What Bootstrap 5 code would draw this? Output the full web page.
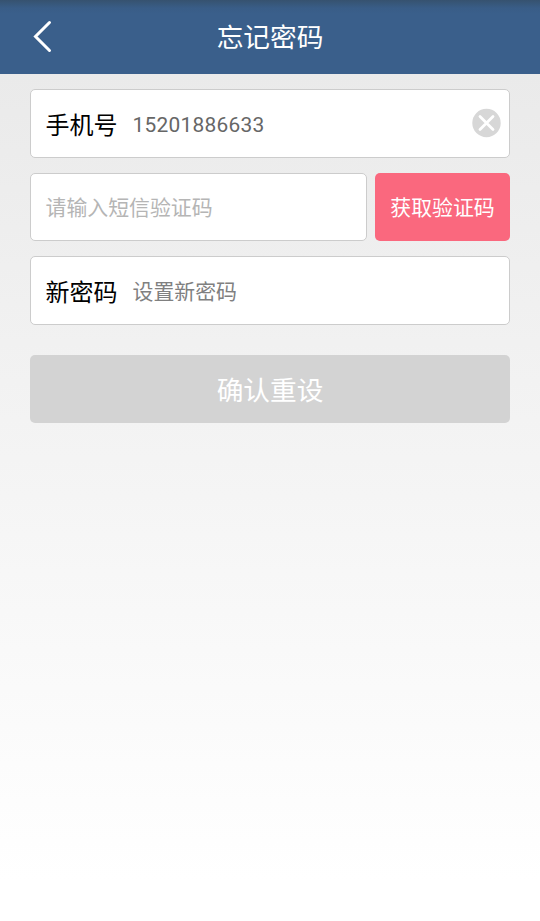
<!DOCTYPE html>
<html lang="zh-CN">
<head>
<meta charset="utf-8">
<meta name="viewport" content="width=device-width, initial-scale=1">
<title>忘记密码</title>
<link href="https://cdn.jsdelivr.net/npm/bootstrap@5.3.0/dist/css/bootstrap.min.css" rel="stylesheet">
<style>
body {
  font-family: Roboto, "Noto Sans CJK SC", sans-serif;
  background: linear-gradient(#eaeaea 0, #eaeaea 74px, #fff 880px) no-repeat #fff;
  min-height: 921px;
  line-height: 1;
}
.top-bar {
  height: 74px;
  background: linear-gradient(#36526f 0, #395d87 8px, #3a5f8b 14px);
}
.top-bar h1 { font-size: 26.7px; line-height: 40px; padding-top: 2px; }
.back-btn { width: 86px; height: 74px; flex: none; }
.form-area { padding: 15px 30px 0; }
.field {
  height: 69px;
  border: 1px solid #ccc;
  border-radius: 5px;
  padding: 0 8px 0 14.5px;
}
.field-short { height: 68px; }
.field-label { width: 87px; font-size: 24px; line-height: 36px; padding-top: 5px; color: #000; }
.field-text { font-size: 20.9px; line-height: 32px; padding-top: 2px; }
.phone { color: #666; letter-spacing: .25px; }
.hint { color: #b5b5b5; }
.hint-dark { color: #808080; }
.code-btn {
  width: 135px; height: 68px;
  font-size: 20.9px;
  border-radius: 5px;
  background: #fa687e;
}
.submit-btn {
  height: 68px;
  margin-top: 30px;
  font-size: 26.7px;
  border-radius: 5px;
  background: #d3d3d3;
}
.btn-text { padding-top: 4px; }
.clear-icon { margin-bottom: 2px; }
.gap-row { gap: 8px; }
.stack-gap { gap: 15px; }
</style>
<script src="https://cdn.jsdelivr.net/npm/bootstrap@5.3.0/dist/js/bootstrap.bundle.min.js"></script>
</head>
<body>
<header class="top-bar d-flex align-items-center text-white">
  <button type="button" class="back-btn btn border-0 p-0 d-flex" aria-label="返回">
    <svg width="86" height="74" viewBox="0 0 86 74" fill="none" stroke="#fff" stroke-width="3" stroke-linecap="round" stroke-linejoin="miter"><path d="M49.5 22.5 35.5 36.5 49.5 50.5"/></svg>
  </button>
  <h1 class="flex-grow-1 text-center fw-normal mb-0">忘记密码</h1>
  <div class="back-btn"></div>
</header>
<main class="form-area">
  <div class="d-flex flex-column stack-gap">
    <div class="field bg-white d-flex align-items-center">
      <span class="field-label">手机号</span>
      <span class="field-text phone flex-grow-1">15201886633</span>
      <svg class="clear-icon" width="30" height="30" viewBox="0 0 30 30"><circle cx="15.5" cy="15" r="14.2" fill="#d7d7d7"/><path d="M9 8.5l13 13M22 8.5l-13 13" stroke="#fff" stroke-width="2.8" stroke-linecap="round"/></svg>
    </div>
    <div class="d-flex gap-row">
      <div class="field field-short bg-white d-flex align-items-center flex-grow-1">
        <span class="field-text hint">请输入短信验证码</span>
      </div>
      <button type="button" class="code-btn btn border-0 text-white p-0 d-flex align-items-center justify-content-center"><span class="btn-text">获取验证码</span></button>
    </div>
    <div class="field bg-white d-flex align-items-center">
      <span class="field-label">新密码</span>
      <span class="field-text hint-dark">设置新密码</span>
    </div>
  </div>
  <button type="button" class="submit-btn btn border-0 text-white p-0 w-100 d-flex align-items-center justify-content-center"><span class="btn-text">确认重设</span></button>
</main>
</body>
</html>
